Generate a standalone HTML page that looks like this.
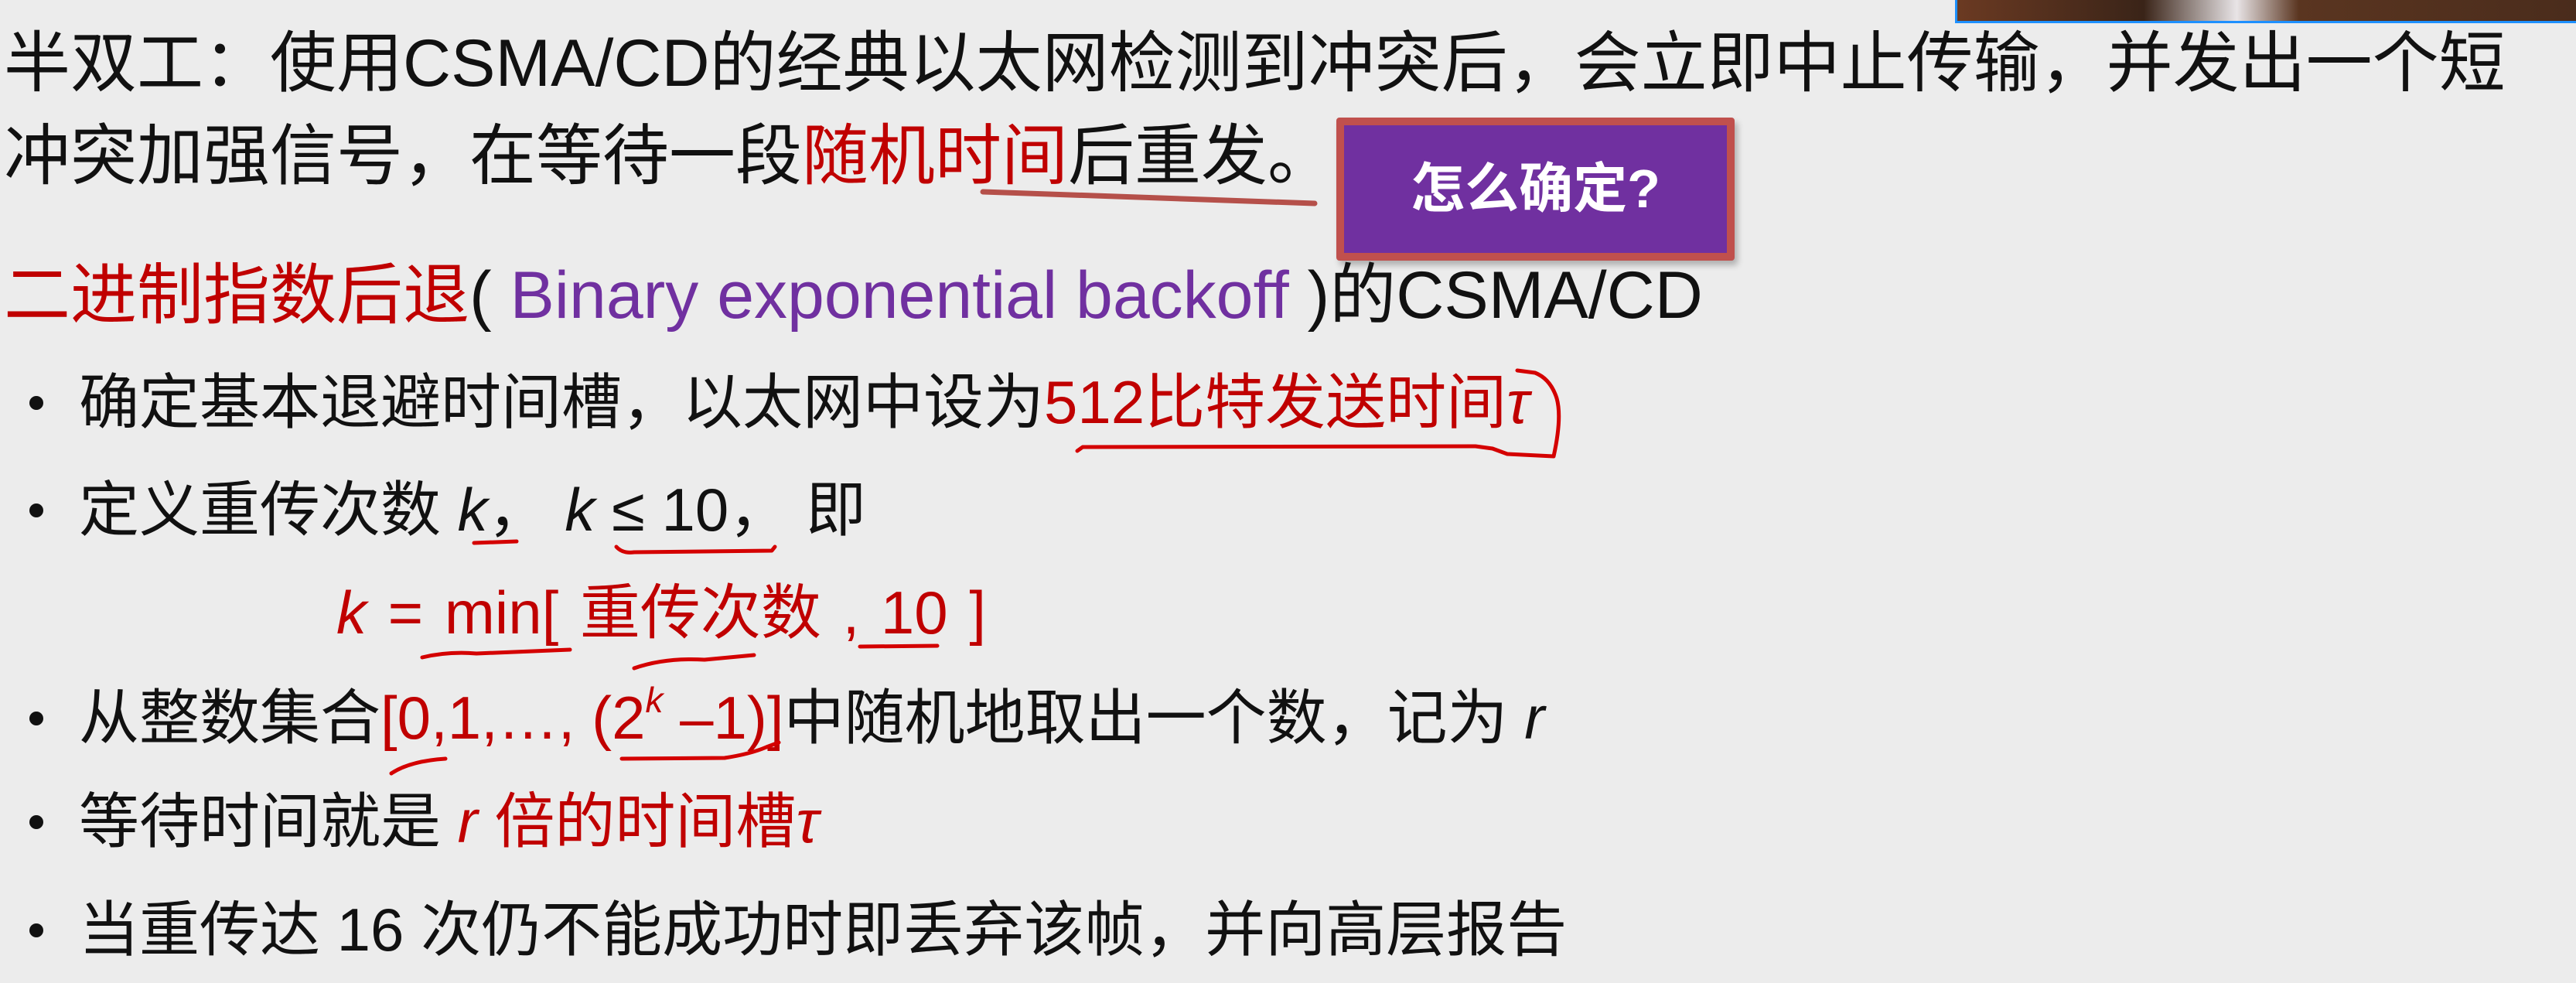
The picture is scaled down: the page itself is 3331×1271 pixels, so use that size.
<!DOCTYPE html>
<html><head><meta charset="utf-8"><style>
html,body{margin:0;padding:0}
body{width:3331px;height:1271px;background:#ececec;position:relative;overflow:hidden;font-family:"Liberation Sans","Noto Sans CJK SC",sans-serif;color:#111}
.l{position:absolute;white-space:nowrap}
.big{font-size:86px;line-height:100px}
.b{font-size:78px;line-height:90px;left:102px}
.dot{position:absolute;left:38px;width:18px;height:18px;border-radius:50%;background:#111}
.r{color:#c00000}
.p{color:#7030a0}
i{font-style:italic}
sup{font-size:46px;line-height:0;vertical-align:0;position:relative;top:-34px}
.box{position:absolute;left:1728px;top:152px;width:495px;height:165px;background:#7030a0;border:10px solid #c0504d;border-radius:4px;box-shadow:4px 6px 8px rgba(0,0,0,.25);color:#fff;font-weight:bold;font-size:70px;line-height:165px;text-align:center}
.vid{position:absolute;left:2528px;top:-4px;width:803px;height:28px;background:linear-gradient(90deg,#6b3a22,#3a2418 30%,#e8e4e6 45%,#5a3520 55%,#4a2c1c);border:3px solid #1e90ff}
</style></head><body>
<div class="vid"></div>
<div class="l big" style="left:5px;top:32px">半双工：使用CSMA/CD的经典以太网检测到冲突后，会立即中止传输，并发出一个短</div>
<div class="l big" style="left:5px;top:152px">冲突加强信号，在等待一段<span class="r">随机时间</span>后重发。</div>
<div class="box">怎么确定?</div>
<div class="l big" style="left:5px;top:332px"><span class="r">二进制指数后退</span>( <span class="p">Binary exponential backoff</span> )的CSMA/CD</div>

<div class="dot" style="top:512px"></div>
<div class="l b" style="top:475px">确定基本退避时间槽，以太网中设为<span class="r">512比特发送时间<i>τ</i></span></div>
<div class="dot" style="top:651px"></div>
<div class="l b" style="top:614px">定义重传次数 <i>k</i>， <i>k</i> ≤ 10， 即</div>
<div class="l b r" style="left:435px;top:747px;word-spacing:6px"><i>k</i> = min[ 重传次数 , 10 ]</div>
<div class="dot" style="top:920px"></div>
<div class="l b" style="top:883px">从整数集合<span class="r">[0,1,…, (2<sup><i>k</i></sup> –1)]</span>中随机地取出一个数，记为 <i>r</i></div>
<div class="dot" style="top:1054px"></div>
<div class="l b" style="top:1017px">等待时间就是 <span class="r"><i>r</i> 倍的时间槽<i>τ</i></span></div>
<div class="dot" style="top:1194px"></div>
<div class="l b" style="top:1157px">当重传达 16 次仍不能成功时即丢弃该帧，并向高层报告</div>

<svg width="3331" height="1271" style="position:absolute;left:0;top:0" fill="none" stroke-linecap="round" stroke-linejoin="round">
<path d="M1271 248 L1700 263" stroke="#b5504a" stroke-width="7"/>
<g stroke="#d40000" stroke-width="5">
<path d="M1393 583 L1400 578 L1908 577 L1930 580 L1949 587 L2009 590 Q2020 540 2013 515 Q2005 490 1985 482 L1962 479"/>
<path d="M613 702 L668 700"/>
<path d="M797 707 Q805 716 820 714 L998 712 L1002 707"/>
<path d="M546 850 Q580 842 616 845 L737 840"/>
<path d="M820 864 Q860 850 911 853 L975 847"/>
<path d="M1112 836 L1212 835"/>
<path d="M506 1000 Q530 984 576 981"/>
<path d="M804 981 L937 980 Q970 975 991 966 L1007 960"/>
</g>
</svg>
</body></html>
